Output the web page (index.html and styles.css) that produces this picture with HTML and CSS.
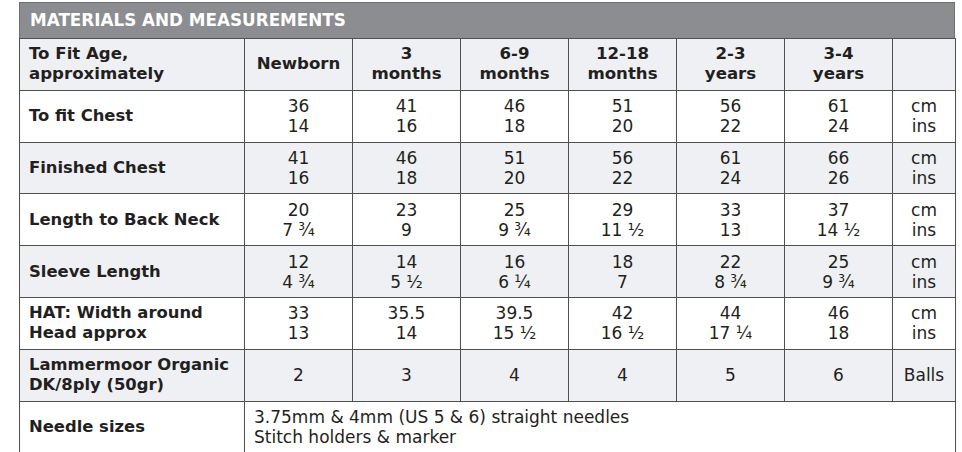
FILE: index.html
```html
<!DOCTYPE html>
<html>
<head>
<meta charset="utf-8">
<link rel="stylesheet" href="styles.css">
</head>
<body>
<div class="sheet">
  <div class="title">MATERIALS AND MEASUREMENTS</div>
  <table class="grid">
    <colgroup>
      <col class="c-label"><col class="c-size"><col class="c-size"><col class="c-size"><col class="c-size"><col class="c-size"><col class="c-size"><col class="c-unit">
    </colgroup>
    <tr class="shade head">
      <td class="label">To Fit Age,<br>approximately</td>
      <td>Newborn</td>
      <td>3<br>months</td>
      <td>6-9<br>months</td>
      <td>12-18<br>months</td>
      <td>2-3<br>years</td>
      <td>3-4<br>years</td>
      <td></td>
    </tr>
    <tr>
      <td class="label">To fit Chest</td>
      <td>36<br>14</td><td>41<br>16</td><td>46<br>18</td><td>51<br>20</td><td>56<br>22</td><td>61<br>24</td>
      <td>cm<br>ins</td>
    </tr>
    <tr class="shade">
      <td class="label">Finished Chest</td>
      <td>41<br>16</td><td>46<br>18</td><td>51<br>20</td><td>56<br>22</td><td>61<br>24</td><td>66<br>26</td>
      <td>cm<br>ins</td>
    </tr>
    <tr>
      <td class="label">Length to Back Neck</td>
      <td>20<br>7 ¾</td><td>23<br>9</td><td>25<br>9 ¾</td><td>29<br>11 ½</td><td>33<br>13</td><td>37<br>14 ½</td>
      <td>cm<br>ins</td>
    </tr>
    <tr class="shade">
      <td class="label">Sleeve Length</td>
      <td>12<br>4 ¾</td><td>14<br>5 ½</td><td>16<br>6 ¼</td><td>18<br>7</td><td>22<br>8 ¾</td><td>25<br>9 ¾</td>
      <td>cm<br>ins</td>
    </tr>
    <tr>
      <td class="label">HAT: Width around<br>Head approx</td>
      <td>33<br>13</td><td>35.5<br>14</td><td>39.5<br>15 ½</td><td>42<br>16 ½</td><td>44<br>17 ¼</td><td>46<br>18</td>
      <td>cm<br>ins</td>
    </tr>
    <tr class="shade">
      <td class="label">Lammermoor Organic<br>DK/8ply (50gr)</td>
      <td>2</td><td>3</td><td>4</td><td>4</td><td>5</td><td>6</td>
      <td>Balls</td>
    </tr>
    <tr class="last">
      <td class="label">Needle sizes</td>
      <td class="notes" colspan="7">3.75mm &amp; 4mm (US 5 &amp; 6) straight needles<br>Stitch holders &amp; marker</td>
    </tr>
  </table>
</div>
</body>
</html>
```
FILE: styles.css
```css
html, body {
  margin: 0;
  padding: 0;
  background: #ffffff;
}
body {
  font-family: "DejaVu Sans", Verdana, sans-serif;
  color: #231f20;
}
.sheet {
  margin: 2px 0 0 19px;
  width: 936px;
}
.title {
  box-sizing: border-box;
  height: 36px;
  background: #8c8d90;
  border: 1px solid #6e6f72;
  border-bottom: none;
  color: #ffffff;
  font-weight: bold;
  font-size: 16.8px;
  line-height: 35px;
  padding-left: 10px;
}
.grid {
  width: 936px;
  table-layout: fixed;
  border-collapse: collapse;
}
.c-label { width: 225px; }
.c-size { width: 108px; }
.c-unit { width: 63px; }
.grid td {
  border: 1.5px solid #505052;
  height: 50.8px;
  padding: 0;
  text-align: center;
  vertical-align: middle;
  font-size: 17px;
  line-height: 20px;
}
.grid tr.shade td {
  background: #eef0f3;
}
.grid tr.head td {
  font-weight: bold;
  font-size: 16.6px;
}
.grid td.label {
  text-align: left;
  padding-left: 9px;
  font-weight: bold;
  font-size: 16.4px;
}
.grid td.notes {
  text-align: left;
  padding-left: 9px;
}
.grid tr.last td {
  border-bottom-color: #c8c8ca;
}
```
